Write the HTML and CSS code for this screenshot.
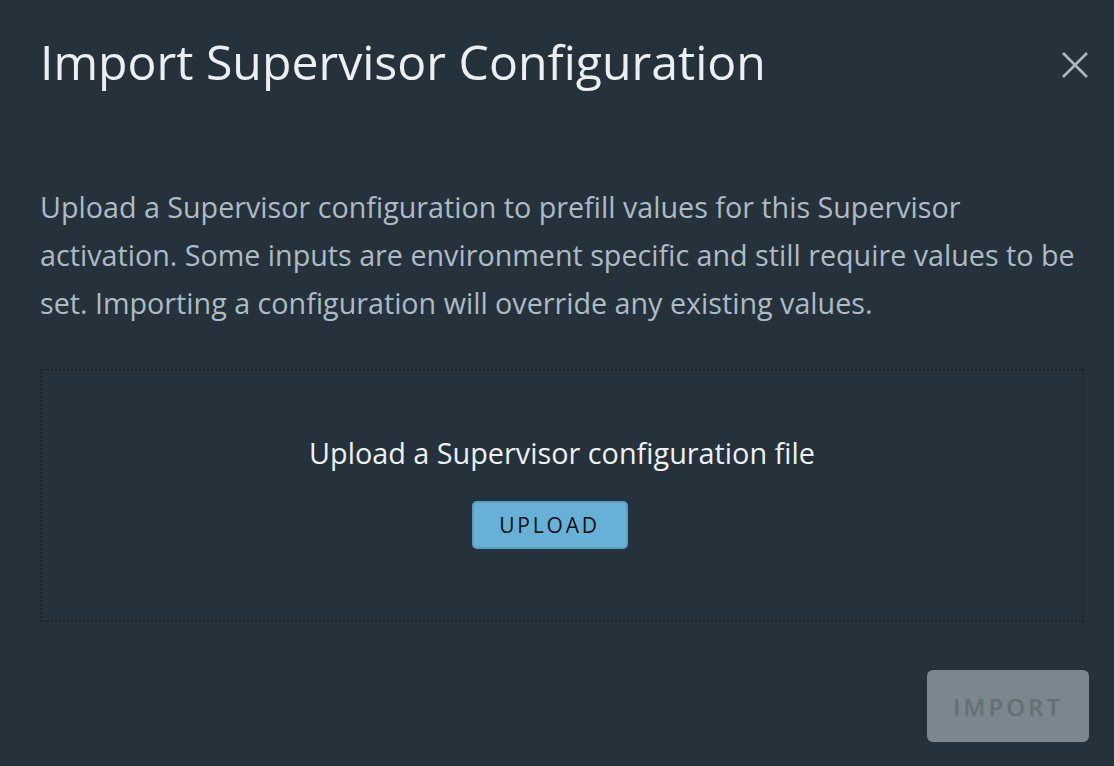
FILE: index.html
```html
<!DOCTYPE html>
<html>
<head>
<meta charset="utf-8">
<link rel="stylesheet" href="styles.css">
</head>
<body>
<div class="modal">
  <div class="header">
    <h1 class="title">Import Supervisor Configuration</h1>
    <button class="close" aria-label="Close">
      <svg width="28" height="28" viewBox="0 0 28 28"><path d="M2 2 L26 26 M26 2 L2 26" stroke="#a9b8c1" stroke-width="2.6" fill="none"/></svg>
    </button>
  </div>
  <p class="desc">Upload a Supervisor configuration to prefill values for this Supervisor<br>activation. Some inputs are environment specific and still require values to be<br>set. Importing a configuration will override any existing values.</p>
  <div class="drop">
    <div class="drop-label">Upload a Supervisor configuration file</div>
    <button class="btn-upload">UPLOAD</button>
  </div>
  <div class="footer">
    <button class="btn-import" disabled>IMPORT</button>
  </div>
</div>
</body>
</html>
```
FILE: styles.css
```css
html, body {
  margin: 0;
  padding: 0;
  background: #25323b;
  width: 1114px;
  height: 766px;
  overflow: hidden;
}
.modal {
  font-family: "Open Sans", "Noto Sans", sans-serif;
  padding: 25px 25px 0 40px;
  box-sizing: border-box;
  width: 1114px;
}
.header {
  display: flex;
  justify-content: space-between;
  align-items: flex-start;
}
.title {
  margin: 0;
  font-weight: 400;
  font-size: 48.2px;
  line-height: 72px;
  color: #eceff1;
}
.close {
  background: none;
  border: 0;
  padding: 0;
  margin-top: 26px;
  width: 28px;
  height: 28px;
  display: flex;
}
.desc {
  margin: 86px 5px 0 0;
  font-size: 28.7px;
  line-height: 48px;
  color: #adbbc4;
  white-space: nowrap;
}
.drop {
  margin: 42px 5px 0 0;
  height: 253px;
  box-sizing: border-box;
  border: 2px dotted #1c2226;
  display: flex;
  flex-direction: column;
  align-items: center;
  padding-top: 62px;
}
.drop-label {
  font-size: 28.8px;
  line-height: 40px;
  color: #eef1f3;
}
.btn-upload {
  margin-top: 28px;
  margin-right: 25px;
  width: 156px;
  height: 48px;
  background: #67b0d6;
  border: 2px solid #5aa0c6;
  border-radius: 5px;
  font-family: "Open Sans", sans-serif;
  font-size: 21px;
  font-weight: 500;
  letter-spacing: 2.8px;
  color: #0b0f12;
}
.footer {
  display: flex;
  justify-content: flex-end;
  margin-top: 48px;
}
.btn-import {
  width: 162px;
  height: 72px;
  background: #7b868e;
  border: 0;
  border-radius: 6px;
  font-family: "Open Sans", sans-serif;
  font-size: 24px;
  font-weight: 600;
  letter-spacing: 3px;
  color: #646f76;
}
```
